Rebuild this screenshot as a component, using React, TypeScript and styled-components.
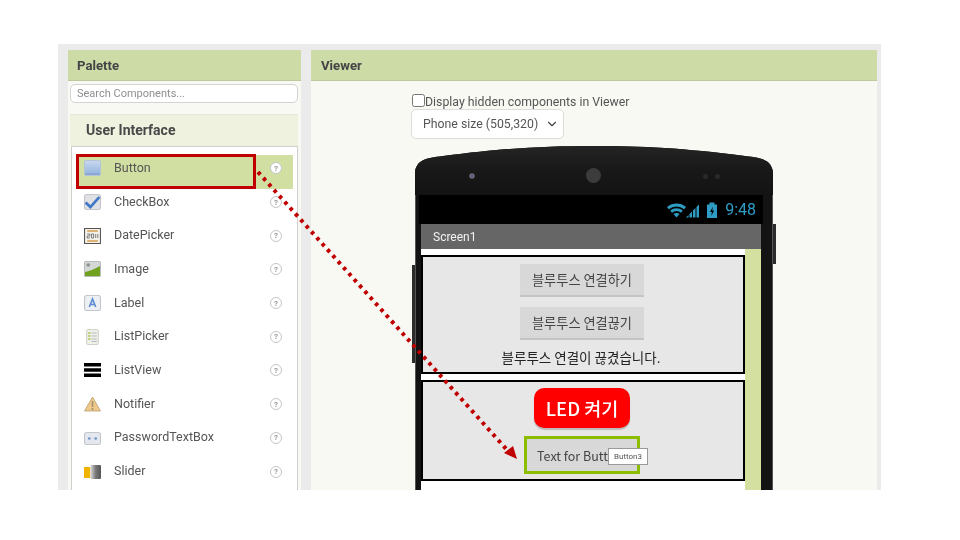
import React from "react";
import styled, { createGlobalStyle } from "styled-components";
import { ChevronDown } from "lucide-react";

const GlobalStyle = createGlobalStyle`
  html, body {
    margin: 0;
    padding: 0;
    background: #fff;
  }
  * {
    box-sizing: border-box;
  }
`;

const Slide = styled.div`
  position: relative;
  width: 960px;
  height: 540px;
  padding: 44px 79px 50px 58px;
  background: #fff;
  overflow: hidden;
  font-family: Roboto, "Liberation Sans", sans-serif;
  filter: blur(0.4px);
`;

const Frame = styled.div`
  display: flex;
  gap: 10px;
  height: 446px;
  padding: 6px 4px 0 10px;
  background: #ebebeb;
  overflow: hidden;
`;

const PaletteBox = styled.section`
  width: 233px;
  flex: none;
  display: flex;
  flex-direction: column;
  background: #f8f9f3;
`;

const ViewerBox = styled.section`
  flex: 1;
  display: flex;
  flex-direction: column;
  background: #f8f9f3;
`;

const PanelHeader = styled.h2<{ $inset: number }>`
  margin: 0;
  height: 31px;
  flex: none;
  padding-left: ${(p) => p.$inset}px;
  display: flex;
  align-items: center;
  font-size: 13.2px;
  font-weight: 700;
  color: #444;
  background: #cddba7;
  border-bottom: 1px solid #bcc99a;
`;

const SearchField = styled.div`
  margin: 3px 3px 0 2px;
  height: 19px;
  flex: none;
  padding: 0 6px;
  display: flex;
  align-items: center;
  font-size: 11px;
  color: #8f8f8f;
  background: #fff;
  border: 1px solid #d4d4d4;
  border-radius: 5px;
`;

const SectionHeader = styled.div`
  margin: 11px 3px 0 2px;
  height: 32px;
  flex: none;
  padding: 0 0 2px 16px;
  display: flex;
  align-items: center;
  font-size: 14px;
  font-weight: 700;
  color: #484848;
  background: #eef2df;
  border-top: 1px solid #e4e8d6;
`;

const ComponentList = styled.div`
  flex: 1;
  min-height: 0;
  margin: 0 3px;
  padding: 8px 4px 0 6px;
  background: #fff;
  border: 1px solid #cfcfcf;
  border-bottom: none;
`;

const ComponentRow = styled.div<{ $selected?: boolean }>`
  height: 33.7px;
  padding: 0 11px 9px 6px;
  display: flex;
  align-items: center;
  gap: 13px;
  font-size: 12.5px;
  color: #555;
  background: ${(p) => (p.$selected ? "#d2dfa3" : "transparent")};
`;

const RowIcon = styled.svg`
  width: 17px;
  height: 16px;
  flex: none;
  position: relative;
  top: 1px;
`;

const RowName = styled.span`
  flex: 1;
`;

const HelpMark = styled.span`
  width: 12px;
  height: 12px;
  flex: none;
  display: flex;
  align-items: center;
  justify-content: center;
  font-size: 8px;
  font-weight: 700;
  color: #999;
  background: #fff;
  border: 1.5px solid #c6c6c6;
  border-radius: 50%;
  position: relative;
  top: 1px;
`;

const ViewerBody = styled.div`
  flex: 1;
  min-height: 0;
  padding: 13px 0 0 100px;
  overflow: hidden;
`;

const HiddenToggle = styled.label`
  display: flex;
  align-items: center;
  height: 15px;
  font-size: 12.3px;
  color: #555;

  input {
    width: 13px;
    height: 13px;
    margin: 0 0 2px 1px;
  }
`;

const SizeSelect = styled.div`
  width: 153px;
  height: 30px;
  padding: 0 4px 0 11px;
  display: flex;
  align-items: center;
  justify-content: space-between;
  font-size: 12.3px;
  color: #555;
  background: #fff;
  border: 1px solid #ddd;
  border-radius: 5px;
`;

const PhoneWrap = styled.div`
  position: relative;
  margin: 7px 0 0 4px;
  width: 358px;
  height: 400px;
`;

const SideKey = styled.span<{ $side: "left" | "right" }>`
  position: absolute;
  ${(p) => (p.$side === "left" ? "left: -3px; top: 119px; height: 98px;" : "right: -3px; top: 78px; height: 40px;")}
  width: 3px;
  background: #2c2c2c;
`;

const PhoneShell = styled.div`
  width: 358px;
  height: 400px;
  padding: 0 11px 0 5px;
  background: #131313;
  border-left: 1px solid #555;
  border-right: 1px solid #555;
  clip-path: path("M0 26 C2 14 10 12 28 10 C90 2 130 0 179 0 C228 0 268 2 330 10 C348 12 356 14 358 26 L358 400 L0 400 Z");
  display: flex;
  flex-direction: column;
`;

const PhoneTop = styled.div`
  position: relative;
  margin: 0 -12px 0 -6px;
  height: 49px;
  flex: none;
  background: linear-gradient(#242424, #181818 50%, #131313);
`;

const FrontCamera = styled.span`
  position: absolute;
  left: 54px;
  top: 27px;
  width: 6px;
  height: 6px;
  border-radius: 50%;
  background: radial-gradient(circle, #4a5a90 20%, #777 45%, #222 80%);
`;

const Earpiece = styled.span`
  position: absolute;
  left: 171px;
  top: 22px;
  width: 15px;
  height: 15px;
  border-radius: 50%;
  background: #3c3c3c;
`;

const Sensor = styled.span<{ $left: number }>`
  position: absolute;
  left: ${(p) => p.$left}px;
  top: 28px;
  width: 5px;
  height: 5px;
  border-radius: 50%;
  background: #2a2a2a;
`;

const StatusBar = styled.div`
  margin: 0 -2px;
  height: 29px;
  flex: none;
  padding-right: 7px;
  display: flex;
  align-items: center;
  justify-content: flex-end;
  gap: 7px;
  font-size: 16px;
  color: #2f9cc4;
  background: #000;
`;

const StatusIcons = styled.svg`
  width: 51px;
  height: 18px;
`;

const TitleBar = styled.div`
  height: 25px;
  flex: none;
  padding-left: 12px;
  display: flex;
  align-items: center;
  font-size: 12px;
  color: #f2f2f2;
  background: #666;
`;

const ScreenArea = styled.div`
  flex: 1;
  display: flex;
  background: #fff;
`;

const Arrangements = styled.div`
  flex: 1;
  padding-top: 6px;
  display: flex;
  flex-direction: column;
  gap: 6px;
`;

const ScrollStrip = styled.div`
  width: 16px;
  flex: none;
  background: #d3e09f;
`;

const Arrangement = styled.div<{ $height: number; $top: number }>`
  height: ${(p) => p.$height}px;
  flex: none;
  display: flex;
  flex-direction: column;
  align-items: center;
  padding: ${(p) => p.$top}px 2px 0 0;
  background: #e7e7e7;
  border: 2px solid #000;
`;

const KoreanButton = styled.div`
  width: 124px;
  height: 33px;
  margin-bottom: 10px;
  flex: none;
  display: flex;
  align-items: center;
  justify-content: center;
  font-family: "Noto Sans CJK KR", sans-serif;
  font-size: 13.2px;
  color: #444;
  background: #d8d8d8;
  border-bottom: 2px solid #c4c4c4;
`;

const StatusLabel = styled.div`
  margin: -3px 2px 0 0;
  font-family: "Noto Sans CJK KR", sans-serif;
  font-size: 13.5px;
  color: #222;
`;

const LedButton = styled.div`
  width: 96px;
  height: 40px;
  flex: none;
  display: flex;
  align-items: center;
  justify-content: center;
  font-family: "Noto Sans CJK KR", sans-serif;
  font-size: 18.5px;
  font-weight: 500;
  color: #fff;
  background: #fe0000;
  border-radius: 10px;
  box-shadow: 0 2px 1px #bbb;
`;

const SelectedButton = styled.div`
  position: relative;
  width: 116px;
  height: 38px;
  margin-top: 8px;
  padding: 1px 0 0 10px;
  flex: none;
  display: flex;
  align-items: center;
  font-family: "Noto Sans CJK KR", sans-serif;
  font-size: 12.5px;
  color: #444;
  white-space: nowrap;
  background: #d8d8d8;
  border: 3px solid #8cbd00;
`;

const Tooltip = styled.span`
  position: absolute;
  left: 81px;
  top: 9px;
  width: 40px;
  height: 17px;
  display: flex;
  align-items: center;
  justify-content: center;
  font-family: Roboto, sans-serif;
  font-size: 8px;
  color: #555;
  background: #fff;
  border: 1px solid #999;
`;

const RedBox = styled.div`
  position: absolute;
  left: 76px;
  top: 154px;
  width: 180px;
  height: 35px;
  border: 3px solid #c00000;
`;

const ArrowOverlay = styled.svg`
  position: absolute;
  left: 0;
  top: 0;
  width: 960px;
  height: 540px;
  pointer-events: none;
`;

const ButtonIcon = () => (
  <RowIcon viewBox="0 0 16 16" preserveAspectRatio="none">
    <defs>
      <linearGradient id="btn" x1="0" y1="0" x2="0" y2="1">
        <stop offset="0" stopColor="#c9d9ee" />
        <stop offset="1" stopColor="#8fb0dc" />
      </linearGradient>
    </defs>
    <rect x="0.5" y="0.5" width="15" height="15" rx="1.5" fill="url(#btn)" stroke="#b5c4d8" />
    <path d="M1 14h14" stroke="#7f9bc4" />
  </RowIcon>
);

const CheckBoxIcon = () => (
  <RowIcon viewBox="0 0 16 16" preserveAspectRatio="none">
    <rect x="0.5" y="0.5" width="15" height="15" rx="2" fill="#dfe1e5" stroke="#c4c6cc" />
    <path d="M1.500 8.500l4.500 4.500 8.500-10" fill="none" stroke="#3f78c8" strokeWidth="2.6" />
  </RowIcon>
);

const DatePickerIcon = () => (
  <RowIcon viewBox="0 0 16 16" preserveAspectRatio="none">
    <rect x="0.5" y="0.5" width="15" height="15" fill="#f3f1ea" stroke="#555" />
    <path d="M3 3h10M3 13h10" stroke="#d8a050" strokeWidth="1.5" />
    <path d="M3 6h2.500v2H3v2h2.500M7 6h2v4H7zM11 6v4M13 6v4" fill="none" stroke="#666" strokeWidth="0.8" />
  </RowIcon>
);

const ImageIcon = () => (
  <RowIcon viewBox="0 0 16 16" preserveAspectRatio="none">
    <rect x="0.5" y="0.5" width="15" height="15" rx="1" fill="#d4d8d6" stroke="#b8bcba" />
    <circle cx="4" cy="4" r="1.8" fill="#8f9391" />
    <path d="M1 15V11C6 10 10 8 15 5v10z" fill="#6fa01e" />
  </RowIcon>
);

const LabelIcon = () => (
  <RowIcon viewBox="0 0 16 16" preserveAspectRatio="none">
    <rect x="0.5" y="0.5" width="15" height="15" rx="2" fill="#eceff3" stroke="#c4c6cc" />
    <path d="M5 12l3-8 3 8M6 9.500h4" fill="none" stroke="#5b8bd0" strokeWidth="1.5" />
  </RowIcon>
);

const ListPickerIcon = () => (
  <RowIcon viewBox="0 0 16 16" preserveAspectRatio="none">
    <rect x="2.5" y="0.5" width="11" height="15" rx="1.5" fill="#eef0ea" stroke="#cfd1cb" />
    <path d="M4 4h2M4 7h2M4 10h2" stroke="#a8c040" strokeWidth="1.4" />
    <path d="M7 4h5M7 7h5M7 10h5M7 12.500h5" stroke="#b8b8b8" />
  </RowIcon>
);

const ListViewIcon = () => (
  <RowIcon viewBox="0 0 16 16" preserveAspectRatio="none">
    <path d="M0 1h16v3.500H0zM0 6.300h16v3.500H0zM0 11.600h16v3.500H0z" fill="#000" />
  </RowIcon>
);

const NotifierIcon = () => (
  <RowIcon viewBox="0 0 16 16" preserveAspectRatio="none">
    <path d="M8 1l7.500 14H.5z" fill="#eec98a" stroke="#b8a070" strokeWidth="0.8" />
    <path d="M8 5v6M8 12v2" stroke="#a8946f" strokeWidth="1.6" />
  </RowIcon>
);

const PasswordIcon = () => (
  <RowIcon viewBox="0 0 16 16" preserveAspectRatio="none">
    <rect x="0.5" y="2.5" width="15" height="12" rx="2" fill="#e4e7ee" stroke="#c4c6cc" />
    <circle cx="5" cy="8.5" r="1.3" fill="#6f94cc" />
    <circle cx="11" cy="8.5" r="1.3" fill="#6f94cc" />
  </RowIcon>
);

const SliderIcon = () => (
  <RowIcon viewBox="0 0 16 16" preserveAspectRatio="none">
    <defs>
      <linearGradient id="sld" x1="0" y1="0" x2="1" y2="0">
        <stop offset="0" stopColor="#ddd" />
        <stop offset="0.5" stopColor="#777" />
        <stop offset="1" stopColor="#555" />
      </linearGradient>
    </defs>
    <rect x="0" y="3" width="6" height="11" fill="#f0b400" />
    <rect x="6" y="1" width="10" height="14" rx="1" fill="url(#sld)" />
  </RowIcon>
);

const components = [
  { name: "Button", icon: <ButtonIcon />, selected: true },
  { name: "CheckBox", icon: <CheckBoxIcon /> },
  { name: "DatePicker", icon: <DatePickerIcon /> },
  { name: "Image", icon: <ImageIcon /> },
  { name: "Label", icon: <LabelIcon /> },
  { name: "ListPicker", icon: <ListPickerIcon /> },
  { name: "ListView", icon: <ListViewIcon /> },
  { name: "Notifier", icon: <NotifierIcon /> },
  { name: "PasswordTextBox", icon: <PasswordIcon /> },
  { name: "Slider", icon: <SliderIcon /> },
];

const App = () => (
  <Slide>
    <GlobalStyle />
    <Frame>
      <PaletteBox>
        <PanelHeader $inset={9}>Palette</PanelHeader>
        <SearchField>Search Components...</SearchField>
        <SectionHeader>User Interface</SectionHeader>
        <ComponentList>
          {components.map((c) => (
            <ComponentRow key={c.name} $selected={c.selected}>
              {c.icon}
              <RowName>{c.name}</RowName>
              <HelpMark>?</HelpMark>
            </ComponentRow>
          ))}
        </ComponentList>
      </PaletteBox>

      <ViewerBox>
        <PanelHeader $inset={10}>Viewer</PanelHeader>
        <ViewerBody>
          <HiddenToggle>
            <input type="checkbox" />
            Display hidden components in Viewer
          </HiddenToggle>
          <SizeSelect>
            Phone size (505,320)
            <ChevronDown size={14} color="#444" />
          </SizeSelect>
          <PhoneWrap>
            <SideKey $side="left" />
            <SideKey $side="right" />
            <PhoneShell>
              <PhoneTop>
                <FrontCamera />
                <Earpiece />
                <Sensor $left={288} />
                <Sensor $left={300} />
              </PhoneTop>
              <StatusBar>
                <StatusIcons viewBox="0 0 51 18">
                  {/* wifi */}
                  <path d="M0 6a15 15 0 0 1 19 0l-1.800 2.200a12 12 0 0 0-15.400 0zM3.200 9.500a10 10 0 0 1 12.600 0l-1.800 2.200a7 7 0 0 0-9 0zM6.500 13a5 5 0 0 1 6 0L9.500 16.500z" fill="#2f9cc4" />
                  {/* signal bars */}
                  <path d="M19 16.500l2.500-2.500v2.500zM22.500 16.500v-3.500l2.500-2.500v6zM26 16.500V9.500l2.500-2.500v9.500zM29.500 16.500V6l2.500-2.500v13z" fill="#2f9cc4" />
                  {/* battery */}
                  <path d="M40 3.500h2.500V1.500h5v2H50v13.500H40z" fill="#2f9cc4" />
                  <path d="M46 5.500l-3 5.500h2l-.8 4 3-5.500h-2z" fill="#000" />
                </StatusIcons>
                9:48
              </StatusBar>
              <TitleBar>Screen1</TitleBar>
              <ScreenArea>
                <Arrangements>
                  <Arrangement $height={119} $top={7}>
                    <KoreanButton>블루투스 연결하기</KoreanButton>
                    <KoreanButton>블루투스 연결끊기</KoreanButton>
                    <StatusLabel>블루투스 연결이 끊겼습니다.</StatusLabel>
                  </Arrangement>
                  <Arrangement $height={101} $top={6}>
                    <LedButton>LED 켜기</LedButton>
                    <SelectedButton>
                      Text for Button3
                      <Tooltip>Button3</Tooltip>
                    </SelectedButton>
                  </Arrangement>
                </Arrangements>
                <ScrollStrip />
              </ScreenArea>
            </PhoneShell>
          </PhoneWrap>
        </ViewerBody>
      </ViewerBox>
    </Frame>
    <RedBox />
    <ArrowOverlay viewBox="0 0 960 540">
      <path d="M258 172L508 451" stroke="#c00000" strokeWidth="4" strokeDasharray="3.5 4.5" fill="none" />
      <path d="M517 459L504 453L513 446z" fill="#c00000" />
    </ArrowOverlay>
  </Slide>
);

export default App;
